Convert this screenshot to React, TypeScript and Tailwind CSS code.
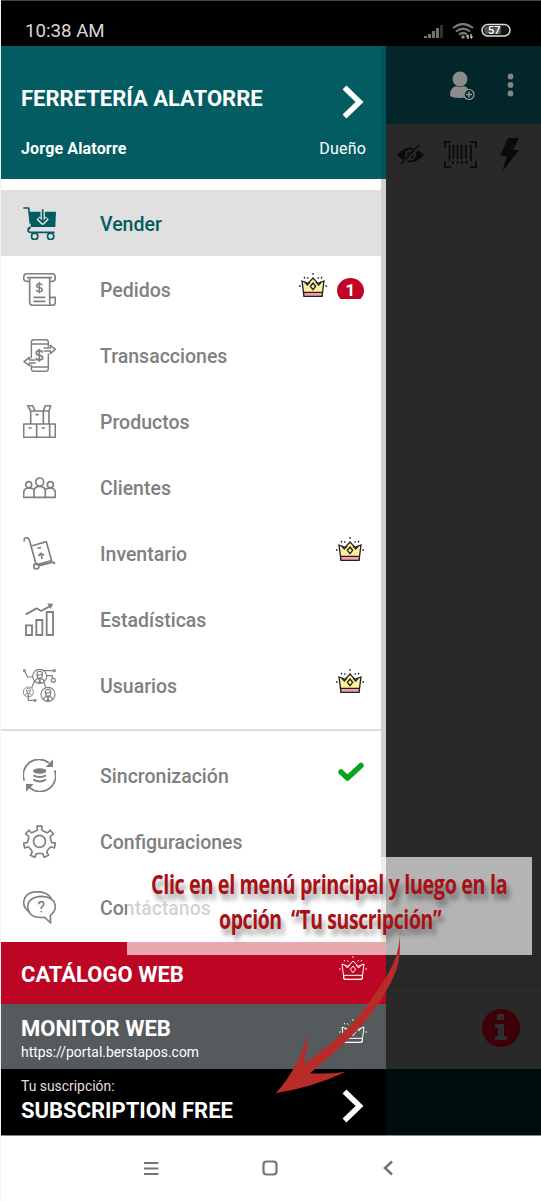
import type { ReactNode } from 'react';
import clsx from 'clsx';

function Glyph({ children, width = 5 }: { children: ReactNode; width?: number }) {
  return (
    <svg viewBox="0 0 99 99" className="size-[33px] shrink-0" fill="none" stroke="currentColor" strokeWidth={width} strokeLinejoin="round">
      {children}
    </svg>
  );
}

function Dollar({ x, y, s = 1 }: { x: number; y: number; s?: number }) {
  return (
    <path
      transform={`translate(${x} ${y}) scale(${s})`}
      d="M0 -17V17M8 -7Q7 -12 0 -12Q-8 -12 -8 -6Q-8 -1 0 0Q9 1 9 7Q9 12 0 12Q-8 12 -8 6"
      strokeWidth={4.5}
    />
  );
}

function SellIcon() {
  return (
    <Glyph width={5}>
      <path d="M1 3H17L22 50" />
      <path d="M17 14H99L97 60H24Z" fill="currentColor" stroke="none" />
      <path d="M59 7V45M45 33L59 47L73 33" className="stroke-[#e0e0e0]" strokeWidth={13} />
      <path d="M59 7V44M47 34L59 46L71 34" strokeWidth={5} />
      <path d="M23 61Q15 63 15 69Q15 76 24 76H95" />
      <circle cx="35" cy="88" r="9.5" />
      <circle cx="83" cy="88" r="9.5" />
      <path d="M22 60L16 67" />
    </Glyph>
  );
}

function OrdersIcon() {
  return (
    <Glyph>
      <path d="M20 25H12Q2 25 2 14Q2 2 12 2H87Q97 2 97 14Q97 25 87 25H80" />
      <path d="M12 14H87M20 14V87Q20 97 30 97H88Q97 97 97 88V73H80V86Q80 97 88 97M80 14V75" />
      <path d="M31 73H67M31 85H67" />
      <Dollar x={49} y={44} />
    </Glyph>
  );
}

function TransactionsIcon() {
  return (
    <Glyph width={4.5}>
      <path d="M76 23V9Q76 2 68 2H33Q25 2 25 9V58M25 77V89Q25 97 33 97H68Q76 97 76 89V44M25 15H76M25 84H76" />
      <path d="M62 27H82V19L97 31L82 44V36H62" />
      <path d="M38 63H19V55L3 68L19 80V72H38" />
      <Dollar x={49} y={49} s={1.15} />
    </Glyph>
  );
}

function ProductsIcon() {
  return (
    <Glyph>
      <path d="M23 57V18H78V57M61 18V57M2 57H97V97H2ZM41 57V97M80 57V97" />
      <path d="M23 18L14 2H29L36 18M61 18L67 2H83L78 18" />
      <path d="M37 29H47M16 69H26M56 69H66" />
    </Glyph>
  );
}

function ClientsIcon() {
  return (
    <Glyph>
      <circle cx="50" cy="33" r="12" />
      <circle cx="17" cy="41" r="9" />
      <circle cx="82" cy="41" r="9" />
      <path d="M33 79V62Q33 46 50 46Q67 46 67 62V79M33 57Q30 51 17 51Q2 52 2 66V79H97V66Q97 52 82 51Q70 51 67 57" />
    </Glyph>
  );
}

function InventoryIcon() {
  return (
    <Glyph>
      <path d="M4 14Q2 2 11 2Q18 3 20 12L38 78" />
      <path d="M25 27L70 14L86 71L38 84M49 86L94 75M94 75V82" />
      <circle cx="40" cy="88" r="8" />
      <path d="M44 34L54 31M57 66L54 50M46 57L53 49L63 55" />
    </Glyph>
  );
}

function StatsIcon() {
  return (
    <Glyph width={5.5}>
      <path d="M9 67H27V96H9ZM40 51H58V96H40ZM71 27H90V96H71Z" strokeLinejoin="miter" />
      <path d="M8 34L41 16L54 24L86 7" />
      <path d="M73 1L91 3L82 18Z" fill="currentColor" stroke="none" />
    </Glyph>
  );
}

function Face({ x, y, s }: { x: number; y: number; s: number }) {
  return (
    <g transform={`translate(${x} ${y}) scale(${s})`}>
      <circle r="21" />
      <path d="M-8 -5V-10Q-7 -15 0 -15Q8 -15 8 -9V-4Q8 5 0 6Q-8 5 -8 -4Q4 -2 7 -8M-14 15Q-12 8 -4 6L0 11L4 6Q12 8 14 15M0 11L-3 19H3Z" />
    </g>
  );
}

function UsersIcon() {
  return (
    <Glyph width={3.6}>
      <Face x={50} y={22} s={1} />
      <Face x={16} y={69} s={0.72} />
      <Face x={75} y={76} s={1} />
      <path d="M34 37L26 56M62 40L68 54M29 24H14L6 9M62 5H91M71 20H88V28M16 85V94H32" />
      <circle cx="4" cy="5" r="3" />
      <circle cx="94" cy="5" r="3" />
      <circle cx="91" cy="34" r="6" />
      <circle cx="36" cy="94" r="3" />
    </Glyph>
  );
}

function SyncIcon() {
  return (
    <Glyph>
      <path d="M4 65A47 47 0 0 1 78 12M95 34A47 47 0 0 1 20 86" />
      <path d="M90 1V24H68ZM9 75H32L9 98Z" fill="currentColor" stroke="none" />
      <ellipse cx="50" cy="36" rx="20" ry="8" fill="currentColor" stroke="none" />
      <path d="M31 49Q50 59 69 49M31 62Q50 73 69 62" strokeWidth={6} />
    </Glyph>
  );
}

const gearPath = () => {
  const points: string[] = [];
  for (let i = 0; i < 7; i++) {
    const mid = (i * 360) / 7 - 90;
    [[-17, 35], [-10, 37], [-9, 48], [9, 48], [10, 37], [17, 35]].forEach(([offset, radius]) => {
      const a = ((mid + offset) * Math.PI) / 180;
      points.push(`${(49.5 + Math.cos(a) * radius).toFixed(1)} ${(51 + Math.sin(a) * radius).toFixed(1)}`);
    });
  }
  return `M${points.join('L')}Z`;
};

function GearIcon() {
  return (
    <Glyph>
      <path d={gearPath()} />
      <circle cx="49.5" cy="49" r="18" />
    </Glyph>
  );
}

function ContactIcon() {
  return (
    <Glyph>
      <path d="M83 96L65 79Q15 83 14 47Q15 18 56 16Q96 18 97 47Q97 61 82 73Z" />
      <path d="M85 22Q72 2 42 2Q3 4 2 36Q3 53 20 63" />
      <path d="M47 40Q47 32 55 32Q63 32 62 40Q61 45 55 49V54M55 59V64" />
    </Glyph>
  );
}

function Crown({ plain = false }: { plain?: boolean }) {
  return (
    <svg viewBox="0 0 84 72" className={clsx('h-6 w-7 shrink-0', plain ? 'text-white' : 'text-[#222]')} fill="none" stroke="currentColor" strokeWidth={plain ? 3 : 4}>
      <path d="M9 24L27 31L42 15L57 31L75 24L69 70H15Z" className={plain ? '' : 'fill-[#ffee9c]'} />
      <path d="M14 58H70V67Q70 70 66 70H18Q14 70 14 67Z" className={plain ? '' : 'fill-[#f39ba6]'} />
      <path d="M42 30L50 40L42 50L34 40ZM17 27L25 36L33 27M51 27L59 36L67 27" />
      <path d="M42 0V5M15 12L18 16M69 12L66 16M0 39H5M79 39H84M25 13L28 17M59 13L56 17" />
    </svg>
  );
}

function Chevron() {
  return (
    <svg viewBox="0 0 22 34" className="h-[34px] w-[22px]" fill="none" stroke="white" strokeWidth="5.500">
      <path d="M2.500 2.500L17.500 17L2.500 31.500" />
    </svg>
  );
}

interface MenuItem {
  label: string;
  icon: ReactNode;
  active?: boolean;
  crown?: boolean;
  count?: number;
  done?: boolean;
}

const mainItems: MenuItem[] = [
  { label: 'Vender', icon: <SellIcon />, active: true },
  { label: 'Pedidos', icon: <OrdersIcon />, crown: true, count: 1 },
  { label: 'Transacciones', icon: <TransactionsIcon /> },
  { label: 'Productos', icon: <ProductsIcon /> },
  { label: 'Clientes', icon: <ClientsIcon /> },
  { label: 'Inventario', icon: <InventoryIcon />, crown: true },
  { label: 'Estadísticas', icon: <StatsIcon /> },
  { label: 'Usuarios', icon: <UsersIcon />, crown: true },
];

const toolItems: MenuItem[] = [
  { label: 'Sincronización', icon: <SyncIcon />, done: true },
  { label: 'Configuraciones', icon: <GearIcon /> },
  { label: 'Contáctanos', icon: <ContactIcon /> },
];

function MenuRow({ item }: { item: MenuItem }) {
  return (
    <div className={clsx('flex h-[66px] items-center pl-[22px] pr-[17px]', item.active ? 'bg-[#e0e0e0] text-[#025c62]' : 'text-[#808080]')}>
      {item.icon}
      <span className="ml-11 flex-1 pt-[3px] text-[19.500px] font-medium">{item.label}</span>
      <div className={clsx('flex items-center gap-[10px]', item.done ? 'mb-[6px]' : 'mb-2')}>
        {item.crown && <Crown />}
        {item.count && (
          <div className="mt-[7px] h-[21px] w-[27px] overflow-hidden">
            <div className="flex h-[25px] items-center justify-center rounded-[50%] bg-[#be0525] text-[17px] font-bold text-white">{item.count}</div>
          </div>
        )}
        {item.done && (
          <svg viewBox="0 0 26 20" className="h-5 w-[26px]" fill="none" stroke="#0aa31c" strokeWidth="5.500" strokeLinecap="round" strokeLinejoin="round">
            <path d="M3 10L9.500 16L23 3.500" />
          </svg>
        )}
      </div>
    </div>
  );
}

function StatusBar() {
  return (
    <div className="flex h-[46px] items-center border-t border-[#444] bg-black pl-6 pr-[30px] pt-[15px]">
      <span className="flex-1 text-[18.700px] text-[#d8d8d8]">10:38 AM</span>
      <svg viewBox="0 0 90 16" className="h-4 w-[90px]">
        <g fill="#737373">
          <path d="M3 13H6V15H3ZM7 11H10V15H7ZM11 8H14V15H11ZM15 5H18V15H15Z" />
          <path d="M19 2H22V15H19Z" fill="#303030" />
        </g>
        <g fill="none" stroke="#777" strokeWidth="2.200">
          <path d="M32 5Q42 -3 52 5M35 8.500Q42 3 49 8.500M38 11.500Q42 8.500 46 11.500" />
        </g>
        <circle cx="42" cy="14" r="1.800" fill="#888" />
        <path d="M47 12V16M45.500 14L47 12M50 11V15M50 15.500L51.500 13.500" stroke="#ddd" strokeWidth="1.200" />
        <rect x="61" y="1.500" width="28" height="11.500" rx="5.700" fill="#111" stroke="#ddd" strokeWidth="1.500" />
        <path d="M63 3.500H80V11H65Q63 10.500 63 3.500Z" fill="#555" />
        <text x="67" y="11.200" fill="#fff" fontSize="11" fontWeight="500">57</text>
      </svg>
    </div>
  );
}

function Backdrop() {
  return (
    <div className="flex min-w-0 flex-1 flex-col bg-[#292929]">
      <div className="flex h-[78px] items-center justify-end gap-[30px] bg-[#02262a] pr-[25px]">
        <svg viewBox="0 0 26 29" className="h-[29px] w-[26px]">
          <circle cx="11" cy="8" r="7.500" fill="#8b8b8b" />
          <path d="M1 24Q1 17 7 15Q11 17 15 15Q21 17 21 24Q21 27 11 27Q1 27 1 24Z" fill="#8b8b8b" />
          <circle cx="20" cy="23.500" r="5" fill="#02262a" stroke="#999" strokeWidth="1.200" />
          <path d="M20 20.500V26.500M17 23.500H23" stroke="#999" strokeWidth="1.500" />
        </svg>
        <svg viewBox="0 0 6 24" className="h-6 w-[11px]" fill="#858585">
          <circle cx="3" cy="3.500" r="2.900" />
          <circle cx="3" cy="12" r="2.900" />
          <circle cx="3" cy="20.500" r="2.900" />
        </svg>
      </div>
      <div className="flex h-[61px] items-center gap-5 pl-[11px]">
        <svg viewBox="0 0 27 22" className="h-[22px] w-[27px]">
          <path d="M0 11Q13 -4 27 11Q13 26 0 11Z" fill="#0b0b0b" />
          <circle cx="13.500" cy="11" r="5.500" fill="#292929" />
          <circle cx="13.500" cy="11" r="3.500" fill="#0b0b0b" />
          <path d="M5 20L23 1" stroke="#292929" strokeWidth="4" />
          <path d="M4 20L22 1" stroke="#0b0b0b" strokeWidth="1.500" />
        </svg>
        <svg viewBox="0 0 33 27" className="h-[27px] w-[33px]" fill="none" stroke="#0d0d0d" strokeWidth="2">
          <path d="M7 1H1V7M26 1H32V7M1 20V26H7M32 20V26H26M5.500 4V20M9.500 4V18M13.500 4V18M17.500 4V18M22 4V18M27 4V20M9 20V23M13.500 20V23M18 20V23M22.500 20V23" />
        </svg>
        <svg viewBox="0 0 20 34" className="ml-[3px] h-[34px] w-5" fill="#0a0a0a">
          <path d="M8 0H19L13 12H19L2 34L7 18H0Z" />
        </svg>
      </div>
      <div className="flex-1" />
      <div className="flex h-[84px] items-center justify-end border-t border-[#202020] pr-[21px]">
        <svg viewBox="0 0 38 38" className="size-[38px]">
          <circle cx="19" cy="19" r="19" fill="#3d0009" />
          <path d="M15 5H22V11H15ZM13 15H22V27H25V31H13V27H16V19H13Z" fill="#2f2d2d" />
        </svg>
      </div>
      <div className="h-[66px] bg-[#000d0f]" />
    </div>
  );
}

function Drawer() {
  return (
    <div className="flex w-[385px] shrink-0 flex-col bg-white">
      <div className="h-[133px] border-r-[5px] border-[#02545a] bg-[#025c62] pl-5 pr-[15px] pt-8 text-white">
        <div className="flex items-center justify-between">
          <h1 className="text-[22px] font-bold leading-[34px]">FERRETERÍA ALATORRE</h1>
          <div className="mr-[2px] mt-[7px]">
            <Chevron />
          </div>
        </div>
        <div className="mt-[18px] flex justify-between text-[16px] leading-6">
          <span className="font-bold tracking-[0.15px]">Jorge Alatorre</span>
          <span className="tracking-[0.2px]">Dueño</span>
        </div>
      </div>
      <div className="h-[763px] border-r-[5px] border-[#cfcfcf] pt-[11px]">
        {mainItems.map((item) => (
          <MenuRow key={item.label} item={item} />
        ))}
        <div className="my-[11px] h-[2px] bg-[#dcdcdc]" />
        {toolItems.map((item) => (
          <MenuRow key={item.label} item={item} />
        ))}
      </div>
      <div className="flex h-[62px] items-center justify-between bg-[#bd0524] pl-5 pr-[19px] text-[22px] font-bold text-white">
        <span className="mt-[2px]">CATÁLOGO WEB</span>
        <div className="mb-[10px]">
          <Crown plain />
        </div>
      </div>
      <div className="flex h-[65px] items-center justify-between bg-[#555a5d] pl-5 pr-[19px] text-white">
        <div className="mt-[5px]">
          <div className="text-[22px] font-bold leading-[26px]">MONITOR WEB</div>
          <div className="text-[13.900px] leading-5">https://portal.berstapos.com</div>
        </div>
        <div className="mb-[11px]">
          <Crown plain />
        </div>
      </div>
      <div className="flex h-[66px] items-center justify-between bg-black pl-5 pr-[22px] text-white">
        <div className="mb-[3px]">
          <div className="text-[13.900px] leading-5 text-[#e8dede]">Tu suscripción:</div>
          <div className="text-[22px] font-bold leading-[29px]">SUBSCRIPTION FREE</div>
        </div>
        <div className="mt-[7px]">
          <Chevron />
        </div>
      </div>
    </div>
  );
}

function NavBar() {
  return (
    <div className="flex h-[66px] items-center border-t border-[#888] bg-white pb-[2px] pl-[142px] text-[#757575]">
      <svg viewBox="0 0 16 16" className="size-4" fill="none" stroke="currentColor" strokeWidth="2.200">
        <path d="M1 3H15.500M1 8.500H15.500M1 14H15.500" />
      </svg>
      <svg viewBox="0 0 16 16" className="ml-[103px] size-4" fill="none" stroke="currentColor" strokeWidth="2.200">
        <rect x="1.500" y="1.500" width="13" height="13" rx="3" />
      </svg>
      <svg viewBox="0 0 10 16" className="ml-[105px] h-4 w-[10px]" fill="none" stroke="currentColor" strokeWidth="2.600">
        <path d="M9 1.500L2 8L9 14.500" />
      </svg>
    </div>
  );
}

// Tutorial hint that floats above the drawer
function Hint() {
  return (
    <>
      <div className="absolute left-[127px] top-[857px] h-[98px] w-[405px] bg-white/65 pt-[9px] font-['Open_Sans',sans-serif] text-[27px] font-bold leading-[35px] text-[#a91016] [text-shadow:4px_6px_6px_rgba(0,0,0,0.4)]">
        <div className="ml-6 w-max origin-left scale-x-[0.732] whitespace-pre tracking-[-0.5px]">Clic en el menú principal y luego en la</div>
        <div className="ml-[92px] w-max origin-left scale-x-[0.718] whitespace-pre tracking-[-0.5px]">opción  “Tu suscripción”</div>
      </div>
      <svg viewBox="0 0 873 843" className="absolute left-[250px] top-[920px] h-[281px] w-[291px]">
        <path
          d="M448 45C456 120 438 165 405 218C345 325 250 400 180 460Q235 463 288 455Q195 499 77 520Q142 450 174 340Q171 390 162 432C230 385 300 325 345 265C405 180 450 120 448 45Z"
          fill="#b92b28"
        />
      </svg>
    </>
  );
}

export default function App() {
  return (
    <div className="relative flex h-[1201px] w-[541px] flex-col overflow-hidden bg-[#f2f2f2] pl-px font-[Roboto,sans-serif]">
      <StatusBar />
      <div className="flex h-[1089px]">
        <Drawer />
        <Backdrop />
      </div>
      <NavBar />
      <Hint />
    </div>
  );
}
